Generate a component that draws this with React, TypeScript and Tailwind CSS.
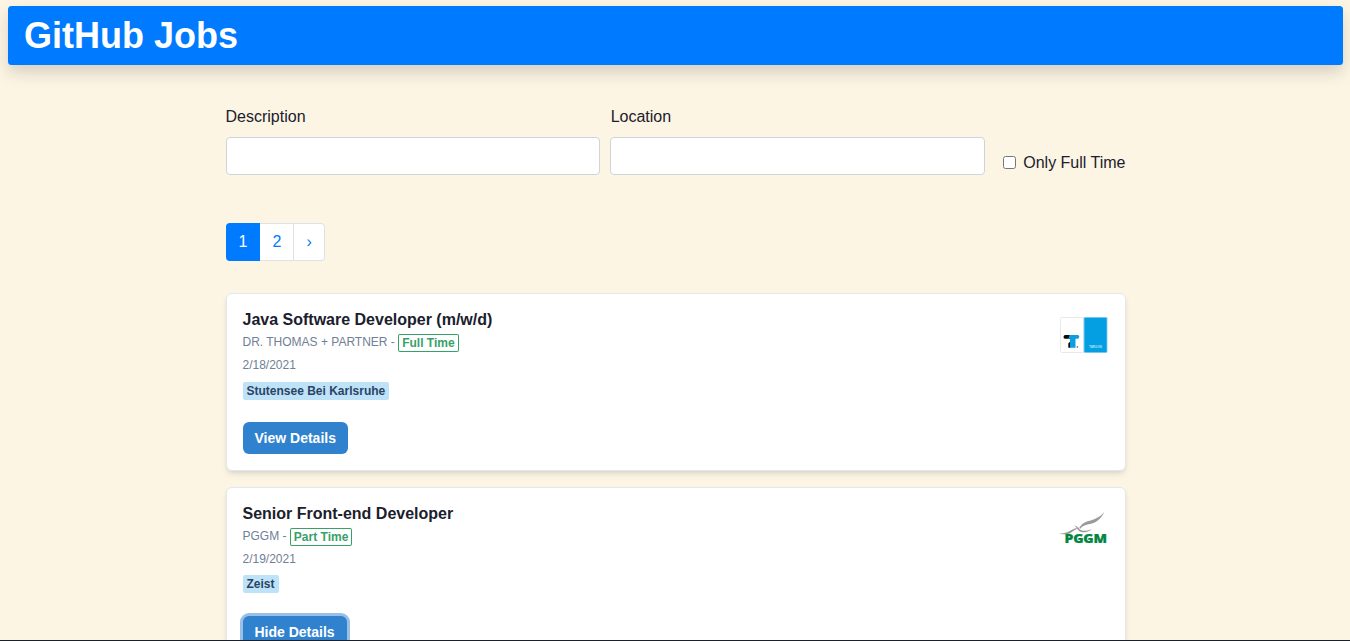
import React from "react";

type Job = {
  title: string;
  company: string;
  type: string;
  date: string;
  place: string;
  open: boolean;
  logo: React.ReactNode;
};

function TLogo() {
  return (
    <svg width="50" height="38" viewBox="0 0 50 38" className="block">
      <rect x="1.5" y="1.5" width="23" height="35" rx="1" fill="#fff" stroke="#e9e9e9" />
      <path d="M6.400 19H11v3.800H6.400a1.900 1.900 0 0 1 0-3.800z" fill="#0a0a0a" />
      <path d="M9.300 27.500L11.500 25V31.800H9.300z" fill="#0a0a0a" />
      <path d="M10.500 19h8.200a1.600 1.600 0 0 1 1.300 2.500l-.8 1.300h-2.700v9h-5.500v-9h-1.500z" fill="#0a9fe0" />
      <rect x="17.700" y="30.300" width="1.400" height="1.300" fill="#555" />
      <rect x="24.500" y="1" width="24" height="36" rx="1.300" fill="#9bd6f1" />
      <rect x="25.400" y="1.700" width="22.300" height="34.500" rx=".8" fill="#049fe2" />
      <text x="30" y="32.200" fontSize="3.800" fontWeight="700" fill="#b4e3f8" textLength="13" lengthAdjust="spacingAndGlyphs">
        TARGON
      </text>
    </svg>
  );
}

function PggmLogo() {
  return (
    <svg width="50" height="38" viewBox="0 0 50 38" className="block">
      <g fill="#999" stroke="#999" strokeWidth=".15">
        <path d="M45 2.500C42 8.500 38 12.300 32 13.700C26.500 14.700 23.500 15.500 21.500 18.500L20.300 18C22.500 14.500 24.500 12.800 29 11.300C35 9.500 40 8 45 2.500Z" />
        <path d="M.5 23.800C7 23.600 10 21.500 13 19.800C15 18.600 17 18 19.500 18.300C16.500 19.200 14.800 20.600 12.500 22.200C9 24.800 5 24.500 .5 23.800Z" />
        <path d="M15.500 15.700C19 16.100 19.500 18.800 22 20.200C25 21.500 29 20.700 32.500 19.400C29 22 24.500 23 21 21.500C18.500 20.200 18.500 17.500 15.500 15.700Z" />
      </g>
      <text
        transform="translate(5.600 33.100) scale(1.22 1)"
        fontSize="12"
        fontWeight="800"
        fontFamily="'Open Sans', sans-serif"
        fill="#008542"
        stroke="#008542"
        strokeWidth=".25"
        letterSpacing="-.2"
        textLength="34.500"
        lengthAdjust="spacingAndGlyphs"
      >
        PGGM
      </text>
    </svg>
  );
}

const jobs: Job[] = [
  {
    title: "Java Software Developer (m/w/d)",
    company: "DR. THOMAS + PARTNER",
    type: "Full Time",
    date: "2/18/2021",
    place: "Stutensee Bei Karlsruhe",
    open: false,
    logo: <TLogo />,
  },
  {
    title: "Senior Front-end Developer",
    company: "PGGM",
    type: "Part Time",
    date: "2/19/2021",
    place: "Zeist",
    open: true,
    logo: <PggmLogo />,
  },
];

function JobCard({ job }: { job: Job }) {
  return (
    <article className="mb-4 flex h-[177.8px] items-start justify-between rounded-md border border-[#e2e8f0] bg-white px-4 pt-[14px] shadow-[0_4px_6px_-1px_rgba(0,0,0,0.1),0_2px_4px_-1px_rgba(0,0,0,0.06)]">
      <div className="flex flex-col items-start">
        <h2 className="text-base leading-6 font-bold">{job.title}</h2>
        <div className="mt-[2px] flex h-[18px] text-xs leading-[17px] text-[#718096]">
          <span className="whitespace-pre">{job.company} - </span>
          <span className="h-[18px] rounded-xs px-1 leading-[18px] font-bold text-[#38a169] shadow-[inset_0_0_0_1px_#38a169]">
            {job.type}
          </span>
        </div>
        <div className="mt-[4px] text-xs leading-[18px] text-[#718096]">{job.date}</div>
        <span className="mt-[7.6px] h-[18px] rounded-xs bg-[#bee3f8] px-1 text-xs leading-[18px] font-bold text-[#2a4365]">
          {job.place}
        </span>
        <button
          className={
            "mt-[22.4px] h-8 rounded-md bg-[#3182ce] px-3 pt-px text-sm leading-[17px] font-bold text-white " +
            (job.open ? "shadow-[0_0_0_3px_rgba(49,130,206,0.5)]" : "")
          }
        >
          {job.open ? "Hide Details" : "View Details"}
        </button>
      </div>
      <div className="mt-[8px]">{job.logo}</div>
    </article>
  );
}

export default function App() {
  return (
    <div className="flex h-[641px] flex-col overflow-hidden bg-[#fdf5e4] font-['Liberation_Sans',Arial,sans-serif] text-[#1a202c]">
      <div className="min-h-0 flex-1 overflow-hidden pt-[6px]">
        <header className="mr-[7px] ml-2 flex h-[59px] items-center rounded-[3.5px] bg-[#007bff] px-4 shadow-[0_8px_16px_rgba(0,0,0,0.15)]">
          <h1 className="text-[36px] leading-[45px] font-bold text-white">GitHub Jobs</h1>
        </header>
        <main className="mt-10 ml-[225.5px] w-[900px]">
          <form className="flex items-end">
            <label className="mr-[10.200px] flex w-[374.7px] flex-col gap-2">
              <span className="leading-6">Description</span>
              <input className="h-[38px] rounded-sm border border-[#ced4da] bg-white px-3" />
            </label>
            <label className="flex w-[374.7px] flex-col gap-2">
              <span className="pl-[0.3px] leading-6">Location</span>
              <input className="h-[38px] rounded-sm border border-[#ced4da] bg-white px-3" />
            </label>
            <label className="ml-[18.200px] flex h-6 items-center">
              <input type="checkbox" className="mr-[7px] mb-[2px] size-[13px]" />
              <span className="leading-6 whitespace-nowrap">Only Full Time</span>
            </label>
          </form>
          <nav className="mt-12 flex h-[38px] w-[99.500px] overflow-hidden rounded-sm bg-white text-[#007bff] shadow-[inset_0_0_0_1px_#dee2e6]">
            <span className="flex w-[34.500px] items-center bg-[#007bff] pl-[13px] text-white">1</span>
            <span className="flex w-[34px] items-center border-r border-[#dee2e6] pl-[12.5px]">2</span>
            <span className="flex flex-1 items-center pl-[12.4px]">›</span>
          </nav>
          <section className="mt-8">
            {jobs.map((job) => (
              <JobCard key={job.title} job={job} />
            ))}
          </section>
        </main>
      </div>
      <div className="h-px shrink-0 bg-[#1a202c]" />
    </div>
  );
}
